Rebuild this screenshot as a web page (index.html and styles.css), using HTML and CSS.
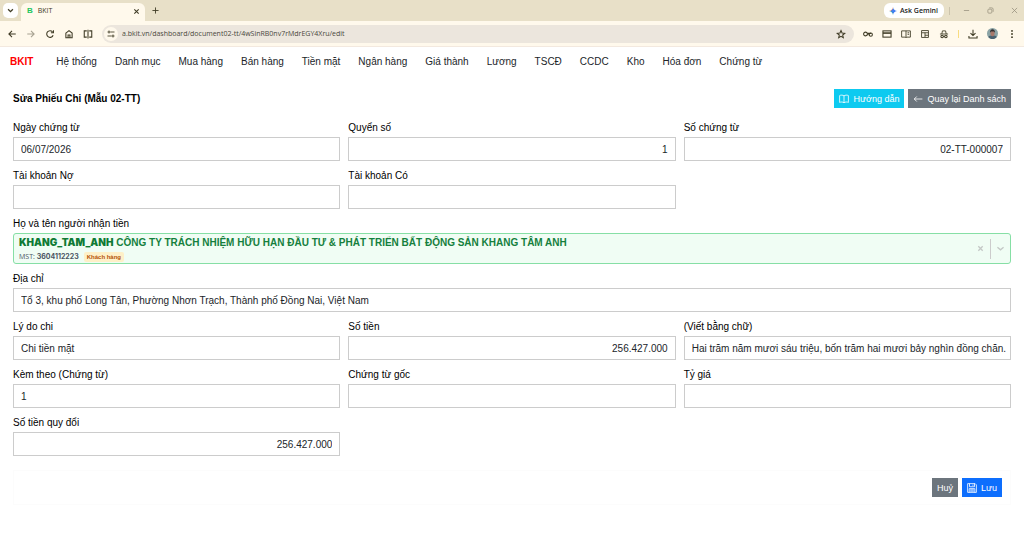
FILE: index.html
```html
<!DOCTYPE html>
<html lang="vi">

<head>
    <meta charset="UTF-8">
    <meta name="viewport" content="width=device-width, initial-scale=1.0">
    <title>BKIT</title>
    <link rel="stylesheet" href="styles.css">
</head>

<body>
    <header class="browser">
        <div class="tab-strip">
            <button class="tab-search" aria-label="Search tabs">
                <svg class="icon-small" viewBox="0 0 16 16"><path d="m2.500 5 5.500 5.500L13.500 5" stroke-width="3" /></svg>
            </button>
            <div class="tab">
                <span class="favicon">B</span>
                <span class="tab-title">BKIT</span>
                <button class="plain" aria-label="Close tab">
                    <svg class="icon-small" viewBox="0 0 16 16"><path d="m3 3 10 10M13 3 3 13" stroke-width="2.500" /></svg>
                </button>
            </div>
            <button class="plain new-tab" aria-label="New tab">
                <svg class="icon-small" viewBox="0 0 16 16"><path d="M8 1v14M1 8h14" stroke-width="2" /></svg>
            </button>
            <button class="gemini">
                <svg class="spark" viewBox="0 0 16 16">
                    <path d="M8 0c.5 4.500 3 7.500 8 8H8z" fill="#4285f4" />
                    <path d="M16 8c-5 .5-7.500 3.500-8 8V8z" fill="#3b6ff0" />
                    <path d="M8 16C7.500 11.500 5 8.500 0 8h8z" fill="#34a8a0" />
                    <path d="M0 8c5-.5 7.500-3.500 8-8v8z" fill="#ea7a60" />
                    <circle cx="8" cy="8" r="3.500" fill="#3f7ff2" />
                </svg>
                Ask Gemini
            </button>
            <span class="strip-divider"></span>
            <div class="window-controls">
                <button class="plain" aria-label="Minimize">
                    <svg class="icon-small" viewBox="0 0 16 16"><path d="M2 8h12" /></svg>
                </button>
                <button class="plain" aria-label="Restore">
                    <svg class="icon-small" viewBox="0 0 16 16"><rect x="2" y="5" width="9" height="9" rx="2" /><path d="M5 2h6a3 3 0 0 1 3 3v6" /></svg>
                </button>
                <button class="plain" aria-label="Close">
                    <svg class="icon-small" viewBox="0 0 16 16"><path d="m2 2 12 12M14 2 2 14" /></svg>
                </button>
            </div>
        </div>

        <div class="toolbar">
            <div class="nav-buttons">
                <button class="plain" aria-label="Back">
                    <svg class="icon" viewBox="0 0 16 16"><path d="M14 8H3M8 3 3 8l5 5" /></svg>
                </button>
                <button class="plain faded" aria-label="Forward">
                    <svg class="icon" viewBox="0 0 16 16"><path d="M2 8h11M8 3l5 5-5 5" /></svg>
                </button>
                <button class="plain" aria-label="Reload">
                    <svg class="icon" viewBox="0 0 16 16"><path d="M13 10A5.300 5.300 0 1 1 12 4.500M13.500 2v4H9.500" /></svg>
                </button>
                <button class="plain" aria-label="Home">
                    <svg class="icon" viewBox="0 0 16 16"><path d="M3 6.500 8 2.500l5 4V14H3zM6.500 14V9.500h3V14" /></svg>
                </button>
                <button class="plain" aria-label="Split view">
                    <svg class="icon" viewBox="0 0 16 16"><path d="M6 3H2v10h4M10 3h4v10h-4M8 1v14" /></svg>
                </button>
            </div>
            <div class="address-bar">
                <button class="plain site-info" aria-label="Site information">
                    <svg class="icon-info" viewBox="0 0 16 16"><path d="M7 4h8M1 12h8" /><circle cx="4" cy="4" r="2" /><circle cx="12" cy="12" r="2" /></svg>
                </button>
                <input class="url" type="text" aria-label="Address" value="a.bkit.vn/dashboard/document02-tt/4wSinRB0nv7rMdrEGY4Xru/edit">
                <button class="plain" aria-label="Bookmark">
                    <svg class="icon" viewBox="0 0 16 16"><path d="m8 2.500 1.700 4 4.300.4-3.300 2.800 1 4.200L8 11.700l-3.700 2.200 1-4.200L2 6.900l4.300-.4z" /></svg>
                </button>
            </div>
            <div class="extensions">
                <button class="plain" aria-label="Passwords">
                    <svg class="icon" viewBox="0 0 16 16"><circle cx="4" cy="8" r="3" /><path d="M7 7h6M7 9h2" /><circle cx="12.500" cy="9" r="2.500" /></svg>
                </button>
                <button class="plain" aria-label="Payment methods">
                    <svg class="icon" viewBox="0 0 16 16"><rect x="1.500" y="3" width="13" height="10" /><path d="M1.500 6.500h13" stroke-width="2.500" /></svg>
                </button>
                <button class="plain" aria-label="Reading mode">
                    <svg class="icon" viewBox="0 0 16 16"><path d="M1 3h14v10H9l-1 1-1-1H1zM8 3v11M10.500 6H13M10.500 8.500H13" stroke-width="1.400" /></svg>
                </button>
                <button class="plain" aria-label="Layout">
                    <svg class="icon" viewBox="0 0 16 16"><path d="M2.500 2.500h11v11h-11zM3 6h10M8 6v7M8 10h5" stroke-width="1.400" /></svg>
                </button>
                <button class="plain" aria-label="Incognito">
                    <svg class="icon" viewBox="0 0 16 16"><path d="M1.500 8h13M4.500 8l1-5h5l1 5M7 12h2" stroke-width="1.400" /><circle cx="5" cy="12" r="2" /><circle cx="11" cy="12" r="2" /></svg>
                </button>
                <span class="ext-divider"></span>
                <button class="plain" aria-label="Downloads">
                    <svg class="icon" viewBox="0 0 16 16"><path d="M8 1v9M4 6.500 8 10.500l4-4M1.500 11v3.500h13V11" /></svg>
                </button>
                <button class="plain" aria-label="Profile">
                    <svg class="avatar" viewBox="0 0 16 16">
                        <circle cx="8" cy="8" r="8" fill="#8ba3a5" />
                        <path d="M2 13c1-2 3-2 6-2s5 0 6 2c-3 4-9 4-12 0z" fill="#4b6270" />
                        <ellipse cx="8" cy="8" rx="3" ry="4" fill="#a8786a" />
                        <path d="M4.500 7c-1-7 8-7 7 0L10 5H6z" fill="#352f30" />
                    </svg>
                </button>
                <button class="plain" aria-label="Menu">
                    <svg class="icon" viewBox="0 0 16 16"><g fill="currentColor" stroke="none"><circle cx="8" cy="3" r="1.500" /><circle cx="8" cy="8" r="1.500" /><circle cx="8" cy="13" r="1.500" /></g></svg>
                </button>
            </div>
        </div>
    </header>

    <nav class="menu">
        <a class="brand" href="#">BKIT</a>
        <a href="#">Hệ thống</a>
        <a href="#">Danh mục</a>
        <a href="#">Mua hàng</a>
        <a href="#">Bán hàng</a>
        <a href="#">Tiền mặt</a>
        <a href="#">Ngân hàng</a>
        <a href="#">Giá thành</a>
        <a href="#">Lương</a>
        <a href="#">TSCĐ</a>
        <a href="#">CCDC</a>
        <a href="#">Kho</a>
        <a href="#">Hóa đơn</a>
        <a href="#">Chứng từ</a>
    </nav>

    <main class="content">
        <div class="page-header">
            <h1>Sửa Phiếu Chi (Mẫu 02-TT)</h1>
            <div class="actions">
                <a class="btn btn-info" href="#">
                    <svg class="btn-icon" viewBox="0 0 16 16"><path d="M8 3C6 1.500 3 1.500 1 2.500v11c2-1 5-1 7 .5 2-1.500 5-1.500 7-.5v-11c-2-1-5-1-7 .5zv11" /></svg>
                    Hướng dẫn
                </a>
                <a class="btn btn-secondary" href="#">
                    <svg class="btn-icon" viewBox="0 0 16 16"><path d="M15 8H2M6 4 2 8l4 4" /></svg>
                    Quay lại Danh sách
                </a>
            </div>
        </div>

        <form>
            <div class="form-grid">
                <div class="field">
                    <label for="voucher-date">Ngày chứng từ</label>
                    <input type="text" id="voucher-date" value="06/07/2026">
                </div>
                <div class="field">
                    <label for="book-no">Quyển số</label>
                    <input type="text" id="book-no" class="number" value="1">
                </div>
                <div class="field">
                    <label for="voucher-no">Số chứng từ</label>
                    <input type="text" id="voucher-no" class="number" value="02-TT-000007">
                </div>
                <div class="field">
                    <label for="debit">Tài khoản Nợ</label>
                    <input type="text" id="debit">
                </div>
                <div class="field">
                    <label for="credit">Tài khoản Có</label>
                    <input type="text" id="credit">
                </div>
                <div class="field full">
                    <label for="payee">Họ và tên người nhận tiền</label>
                    <div class="payee-select">
                        <button type="button" id="payee" class="payee-value" aria-haspopup="listbox">
                            <span><b class="payee-code">KHANG_TAM_ANH</b> <b>CÔNG TY TRÁCH NHIỆM HỮU HẠN ĐẦU TƯ &amp; PHÁT TRIỂN BẤT ĐỘNG SẢN KHANG TÂM ANH</b></span>
                            <span class="payee-meta"><span>MST: <b class="tax-code">3604112223</b></span><span class="badge">Khách hàng</span></span>
                        </button>
                        <button type="button" class="indicator" aria-label="Xóa">
                            <svg class="icon-small" viewBox="0 0 16 16"><path d="m3 3 10 10M13 3 3 13" stroke-width="3" /></svg>
                        </button>
                        <button type="button" class="indicator open" aria-label="Mở danh sách">
                            <svg class="icon-small" viewBox="0 0 16 16"><path d="m1 5 7 6 7-6" stroke-width="3" /></svg>
                        </button>
                    </div>
                </div>
                <div class="field full">
                    <label for="address">Địa chỉ</label>
                    <input type="text" id="address" value="Tổ 3, khu phố Long Tân, Phường Nhơn Trạch, Thành phố Đồng Nai, Việt Nam">
                </div>
                <div class="field">
                    <label for="reason">Lý do chi</label>
                    <input type="text" id="reason" value="Chi tiền mặt">
                </div>
                <div class="field">
                    <label for="amount">Số tiền</label>
                    <input type="text" id="amount" class="number" value="256.427.000">
                </div>
                <div class="field">
                    <label for="in-words">(Viết bằng chữ)</label>
                    <input type="text" id="in-words" value="Hai trăm năm mươi sáu triệu, bốn trăm hai mươi bảy nghìn đồng chẵn.">
                </div>
                <div class="field">
                    <label for="attached">Kèm theo (Chứng từ)</label>
                    <input type="text" id="attached" value="1">
                </div>
                <div class="field">
                    <label for="original">Chứng từ gốc</label>
                    <input type="text" id="original">
                </div>
                <div class="field">
                    <label for="rate">Tỷ giá</label>
                    <input type="text" id="rate">
                </div>
                <div class="field">
                    <label for="converted">Số tiền quy đổi</label>
                    <input type="text" id="converted" class="number" value="256.427.000">
                </div>
            </div>

            <div class="form-footer">
                <button type="button" class="btn btn-secondary">Huỷ</button>
                <button type="submit" class="btn btn-primary">
                    <svg class="btn-icon" viewBox="0 0 16 16"><path d="M1 1h12l2 2v12H1zM4 1v5h8V1M9.500 2.500v2M3.500 15V9h9v6M5 11h6M5 13h6" /></svg>
                    Lưu
                </button>
            </div>
        </form>
    </main>
</body>

</html>
```
FILE: styles.css
```css
* {
    box-sizing: border-box;
}

body {
    margin: 0;
    background-color: #fff;
    color: #212529;
    font-family: "Liberation Sans", Arial, sans-serif;
    font-size: 10px;
    line-height: 14px;
}

button,
input {
    font: inherit;
    color: inherit;
}

a {
    color: inherit;
    text-decoration: none;
}

svg {
    display: block;
    fill: none;
    stroke: currentColor;
    stroke-width: 1.7;
}

.icon {
    width: 10px;
    height: 10px;
}

.icon-small {
    width: 7px;
    height: 7px;
}

.icon-info {
    width: 8px;
    height: 8px;
}

.plain {
    display: flex;
    align-items: center;
    justify-content: center;
    padding: 0;
    border: 0;
    background: none;
}

/* Browser bar */
.browser {
    background-color: #fff9ec;
    border-bottom: 1px solid #f3e9df;
    color: #3f3b25;
    font-family: "Open Sans", "Noto Sans", sans-serif;
    font-size: 7px;
}

.tab-strip {
    display: flex;
    align-items: center;
    height: 21px;
    padding: 0 6px 0 3px;
    background-color: #e8e0c8;
}

.tab-search {
    display: flex;
    align-items: center;
    justify-content: center;
    width: 15px;
    height: 15px;
    padding: 0;
    border: 0;
    border-radius: 5px;
    background-color: #fff;
}

.tab {
    display: flex;
    align-items: center;
    align-self: flex-end;
    width: 124px;
    height: 18px;
    margin-left: 3px;
    padding: 0 5px 2px 6px;
    border-radius: 6px 6px 0 0;
    background-color: #fff9ec;
}

.favicon {
    color: #22c55e;
    font-family: "Liberation Sans", Arial, sans-serif;
    font-size: 8px;
    font-weight: bold;
}

.tab-title {
    flex: 1;
    margin-left: 5px;
}

.new-tab {
    margin-left: 7px;
}

.gemini {
    display: flex;
    align-items: center;
    gap: 3px;
    height: 15px;
    margin-left: auto;
    padding: 0 6px 0 5px;
    border: 0;
    border-radius: 6px;
    background-color: #fff;
    color: #222;
    font-weight: 600;
}

.spark {
    width: 8px;
    height: 8px;
    stroke: none;
}

.strip-divider {
    width: 1px;
    height: 8px;
    margin: 0 13px 0 5px;
    background-color: #cbc3ac;
}

.window-controls {
    display: flex;
    gap: 17px;
    color: #948d7b;
}

.toolbar {
    display: flex;
    align-items: center;
    height: 25px;
    padding: 0 7px;
}

.nav-buttons {
    display: flex;
    gap: 9px;
}

.faded {
    opacity: 0.45;
}

.address-bar {
    display: flex;
    flex: 1;
    align-items: center;
    height: 18px;
    margin-left: 9px;
    padding: 0 8px 0 2px;
    border-radius: 9px;
    background-color: #ece6dd;
}

.site-info {
    width: 14px;
    height: 14px;
    border-radius: 7px;
    background-color: #fff9ec;
}

.url {
    flex: 1;
    min-width: 0;
    padding: 0 4px;
    border: 0;
    outline: 0;
    background: none;
    color: #4a463c;
}

.extensions {
    display: flex;
    align-items: center;
    gap: 9px;
    margin-left: 9px;
}

.ext-divider {
    width: 1px;
    height: 8px;
    background-color: #f8dc80;
}

.avatar {
    width: 11px;
    height: 11px;
    stroke: none;
}

/* Main menu */
.menu {
    display: flex;
    align-items: center;
    gap: 18px;
    height: 29px;
    padding: 0 10px;
}

.brand {
    margin-right: 5px;
    color: #f00;
    font-weight: bold;
}

/* Page */
.content {
    padding: 13px 13px 0;
    color: #000;
}

.page-header {
    display: flex;
    align-items: center;
    justify-content: space-between;
    margin-bottom: 13px;
}

h1 {
    margin: 0;
    font-size: 10px;
}

.actions {
    display: flex;
    gap: 4px;
}

.btn {
    display: flex;
    align-items: center;
    gap: 4px;
    height: 19px;
    padding: 0 5px;
    border: 0;
    color: #fff;
    font-size: 9px;
}

.btn-icon {
    width: 10px;
    height: 10px;
    stroke-width: 1.3;
}

.btn-info {
    background-color: #0dcaf0;
}

.btn-secondary {
    background-color: #6c757d;
}

.btn-primary {
    background-color: #0d6efd;
}

/* Form */
.form-grid {
    display: grid;
    grid-template-columns: repeat(3, 1fr);
    gap: 8px;
}

.field {
    display: flex;
    flex-direction: column;
    gap: 2px;
}

.full {
    grid-column: 1 / -1;
}

.field input {
    width: 100%;
    height: 24px;
    padding: 0 0 0 7px;
    border: 1px solid #ccc;
    outline: 0;
    background-color: #fff;
    color: #212529;
}

.field .number {
    padding-right: 7px;
    text-align: right;
}

.payee-select {
    display: flex;
    align-items: center;
    height: 31px;
    border: 1px solid #86dfa5;
    border-radius: 3px;
    background-color: #f0fdf4;
}

.payee-value {
    display: flex;
    flex: 1;
    flex-direction: column;
    gap: 2px;
    padding: 0 5px;
    border: 0;
    background: none;
    color: #15803d;
    text-align: left;
}

.payee-code {
    color: #0f7a35;
    font-family: Inter, sans-serif;
    font-weight: 900;
}

.payee-meta {
    display: flex;
    align-items: center;
    gap: 5px;
    color: #4b5563;
    font-family: "Open Sans", sans-serif;
    font-size: 7px;
    line-height: 10px;
}

.tax-code {
    font-family: Inter, sans-serif;
}

.badge {
    padding: 0 3px;
    border-radius: 2px;
    background-color: #fef0c7;
    color: #b45309;
    font-family: "Liberation Sans", Arial, sans-serif;
    font-size: 6px;
    font-weight: bold;
}

.indicator {
    display: flex;
    align-items: center;
    height: 20px;
    padding: 0 6px;
    border: 0;
    background: none;
    color: #c4c8c6;
}

.open {
    border-left: 1px solid #ccc;
}

.form-footer {
    display: flex;
    justify-content: flex-end;
    gap: 4px;
    margin-top: 14px;
    padding: 7px 8px;
    border: 1px solid #fcfcfc;
}
```
